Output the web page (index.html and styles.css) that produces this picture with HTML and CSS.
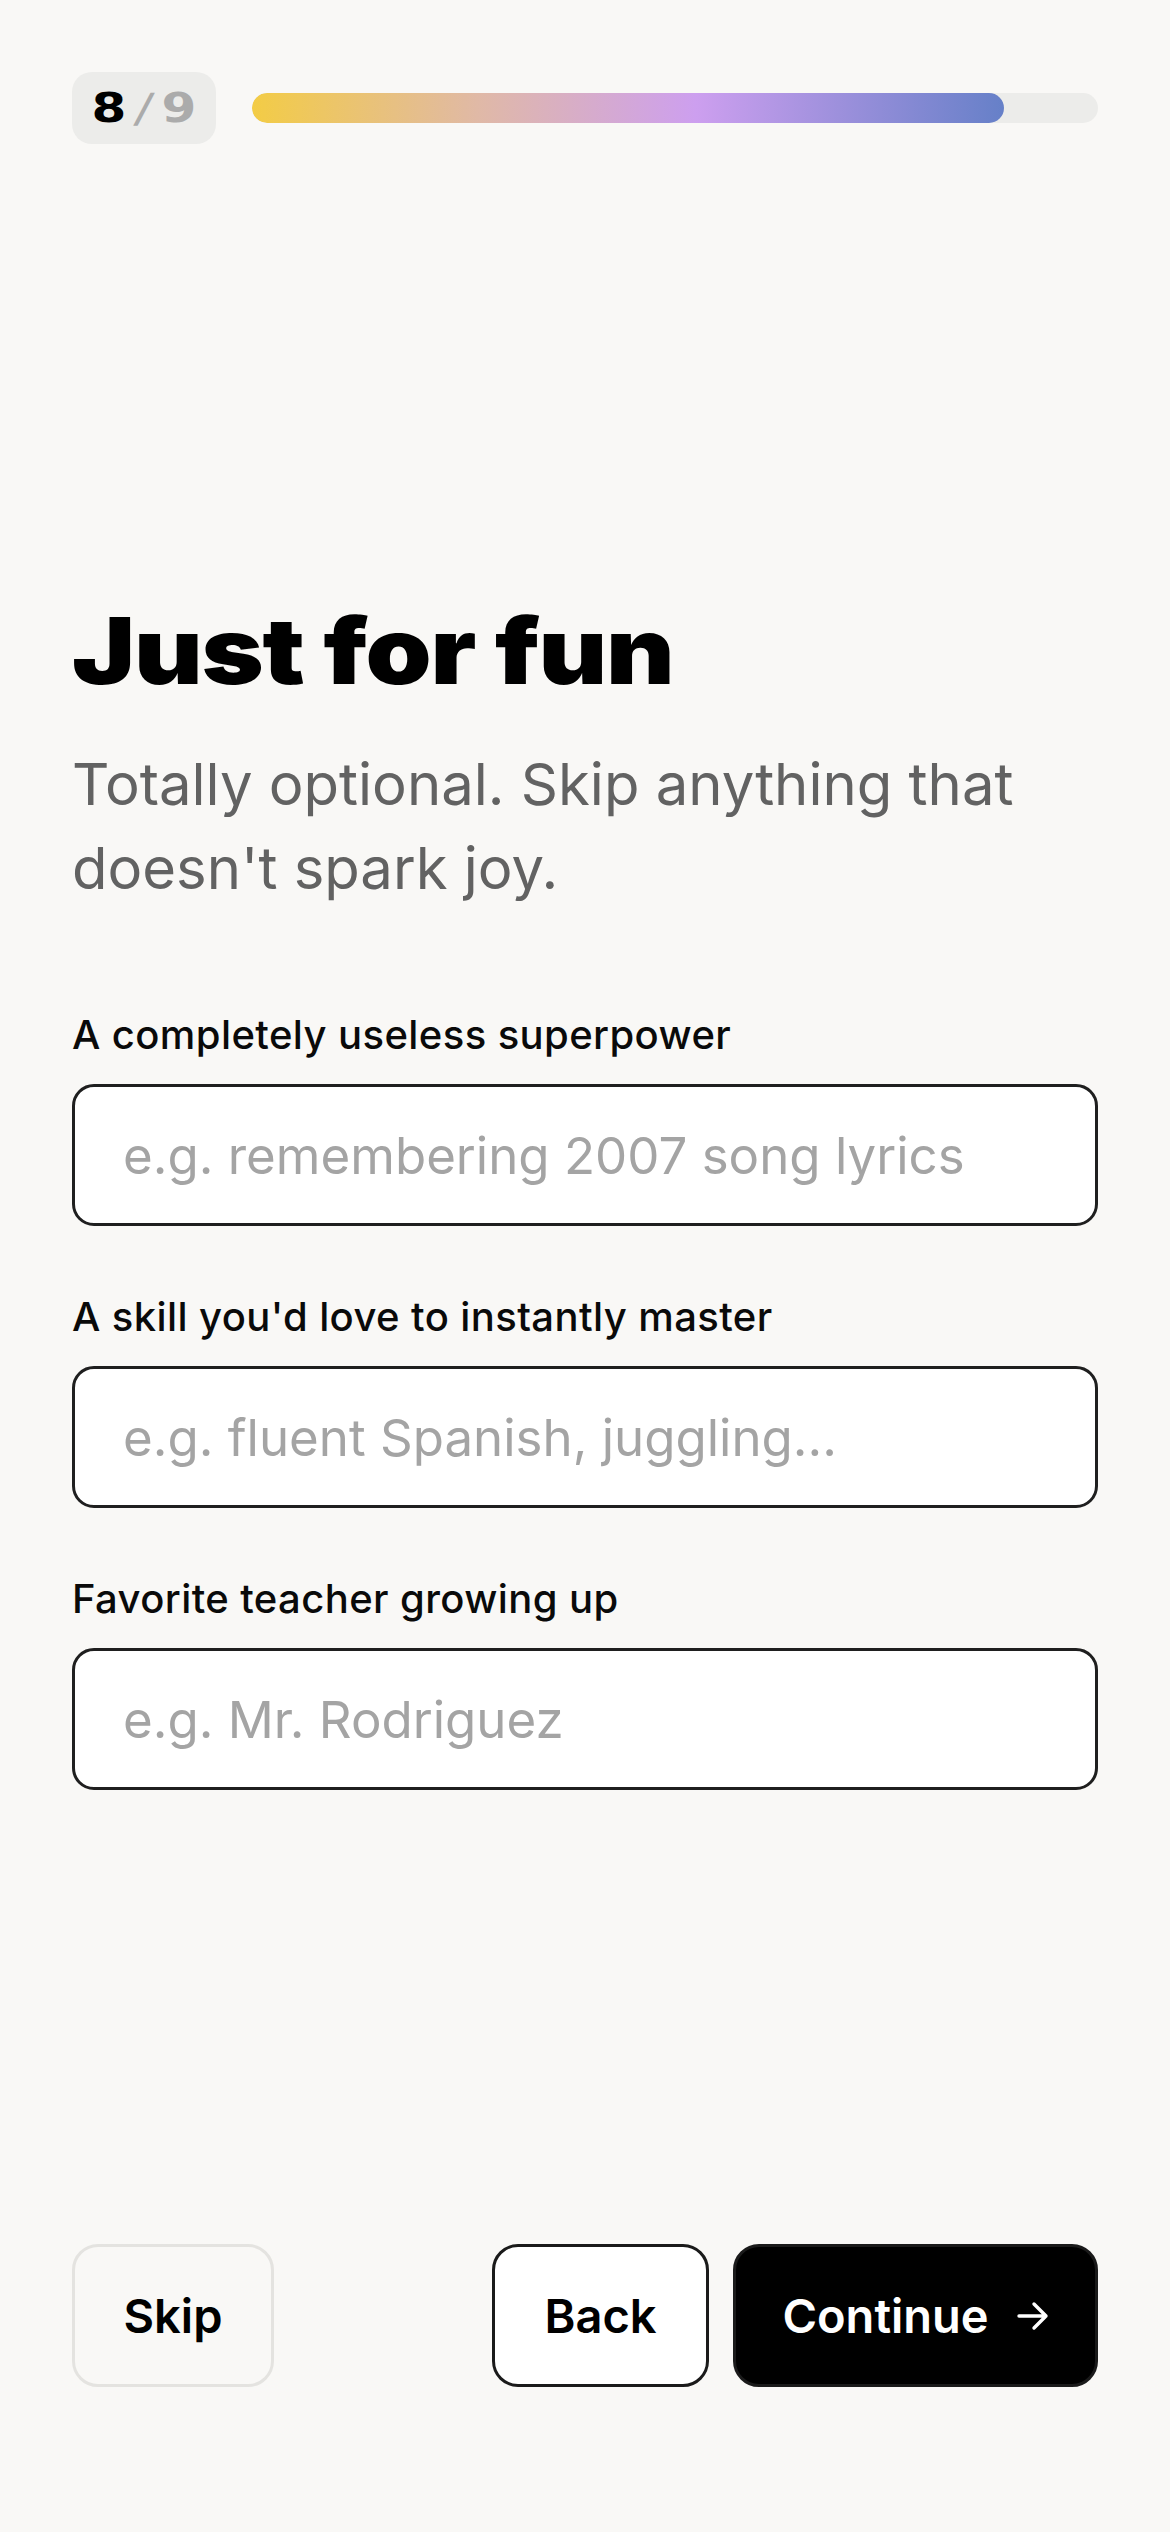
FILE: index.html
```html
<!DOCTYPE html>
<html lang="en">
<head>
<meta charset="utf-8">
<title>Just for fun</title>
<link rel="stylesheet" href="styles.css">
</head>
<body>
<div class="page">
  <header class="topbar">
    <div class="step-badge"><span class="step-cur">8</span><span class="step-sep">/</span><span class="step-total">9</span></div>
    <div class="progress"><div class="progress-fill" style="width: 88.9%"></div></div>
  </header>

  <main class="content">
    <h1 class="title"><span class="title-text">Just for fun</span></h1>
    <p class="subtitle">Totally optional. Skip anything that doesn't spark joy.</p>

    <div class="fields">
      <label class="field">
        <span class="field-label">A completely useless superpower</span>
        <input class="field-input" type="text" placeholder="e.g. remembering 2007 song lyrics">
      </label>
      <label class="field">
        <span class="field-label">A skill you'd love to instantly master</span>
        <input class="field-input" type="text" placeholder="e.g. fluent Spanish, juggling...">
      </label>
      <label class="field">
        <span class="field-label">Favorite teacher growing up</span>
        <input class="field-input" type="text" placeholder="e.g. Mr. Rodriguez">
      </label>
    </div>
  </main>

  <footer class="actions">
    <button class="btn btn-skip" type="button">Skip</button>
    <div class="actions-right">
      <button class="btn btn-back" type="button">Back</button>
      <button class="btn btn-continue" type="button">Continue
        <svg class="arrow" viewBox="0 0 32 30" width="32" height="30" aria-hidden="true">
          <path d="M2 15 H29 M17 3 L29 15 L17 27" fill="none" stroke="#fff" stroke-width="3.4" stroke-linecap="round" stroke-linejoin="round"/>
        </svg>
      </button>
    </div>
  </footer>
</div>
</body>
</html>
```

FILE: styles.css
```css
* { box-sizing: border-box; }

html, body {
  margin: 0;
  padding: 0;
  background: #f9f8f6;
}

body {
  font-family: Inter, "Noto Sans", "Liberation Sans", sans-serif;
  color: #0a0a0a;
}

.page {
  min-height: 2532px;
  display: flex;
  flex-direction: column;
  padding: 72px 72px 145px;
}

.topbar {
  display: flex;
  align-items: center;
  gap: 36px;
}

.step-badge {
  flex: none;
  width: 144px;
  height: 72px;
  border-radius: 20px;
  background: #ececea;
  display: flex;
  align-items: center;
  justify-content: center;
  font-family: "DejaVu Sans", Inter, sans-serif;
  font-weight: 700;
  font-size: 40px;
  line-height: 1;
}

.step-cur,
.step-sep,
.step-total {
  display: inline-block;
  transform: scaleX(1.25);
}

.step-cur { color: #000; }
.step-sep { color: #ababab; margin: 0 14px; transform: scaleX(1) skewX(-12deg); font-weight: 700; }
.step-total { color: #ababab; }

.progress {
  flex: 1;
  height: 30px;
  border-radius: 15px;
  background: #ececea;
  overflow: hidden;
}

.progress-fill {
  height: 100%;
  border-radius: 15px;
  background: linear-gradient(90deg, #f3cc45 0%, #e0b9a6 30%, #cd9fef 59%, #9d90dc 78%, #6680c8 100%);
}

.content {
  margin-top: 456px;
}

.title {
  margin: 0;
  font-family: Inter, sans-serif;
  font-weight: 900;
  font-size: 92px;
  line-height: 101px;
  letter-spacing: -1px;
  color: #000;
}

.title-text {
  display: inline-block;
  transform: scaleX(1.15);
  transform-origin: left center;
}

.subtitle {
  margin: 41px 0 0;
  font-size: 58px;
  line-height: 84px;
  font-weight: 400;
  color: #626262;
  letter-spacing: 0;
}

.fields {
  margin-top: 100px;
  display: flex;
  flex-direction: column;
  gap: 66px;
}

.field {
  display: flex;
  flex-direction: column;
  gap: 24px;
}

.field-label {
  font-size: 40px;
  line-height: 50px;
  font-weight: 500;
  color: #0a0a0a;
  letter-spacing: 0.4px;
}

.field-input {
  width: 100%;
  height: 142px;
  border: 3px solid #1f1f1f;
  border-radius: 22px;
  background: #fff;
  padding: 0 48px;
  font-family: Inter, sans-serif;
  font-size: 51px;
  color: #0a0a0a;
  outline: none;
}

.field-input::placeholder {
  color: #a4a4a4;
}

.actions {
  margin-top: auto;
  display: flex;
  align-items: center;
  justify-content: space-between;
}

.actions-right {
  display: flex;
  gap: 24px;
}

.btn {
  height: 143px;
  border-radius: 26px;
  font-family: Inter, sans-serif;
  font-size: 47px;
  font-weight: 600;
  display: flex;
  align-items: center;
  justify-content: center;
  gap: 28px;
  cursor: pointer;
}

.btn-skip {
  width: 202px;
  background: transparent;
  border: 3px solid #e4e3e0;
  color: #000;
}

.btn-back {
  width: 217px;
  background: #fff;
  border: 3px solid #1a1a1a;
  color: #000;
}

.btn-continue {
  width: 365px;
  background: #000;
  border: 3px solid #1a1a1a;
  color: #fff;
}

.arrow {
  display: block;
  flex: none;
}
```
